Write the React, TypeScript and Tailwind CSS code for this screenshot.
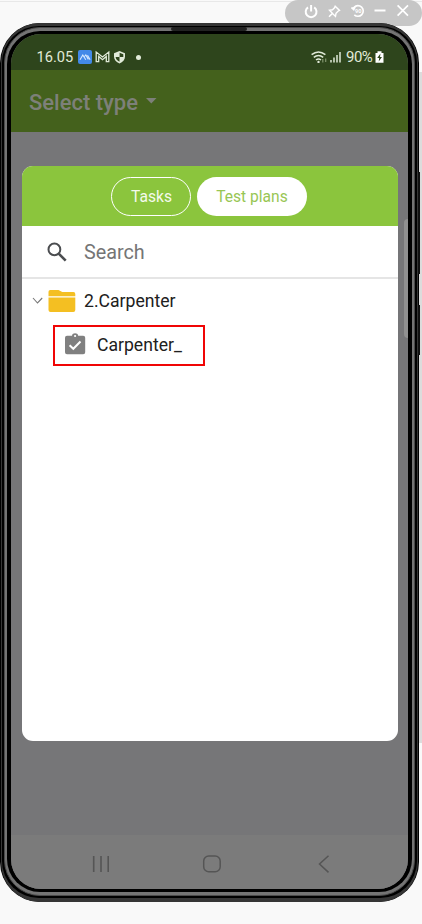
import React from 'react';

const WindowControls = () => (
  <div className="flex h-[26px] w-[137px] items-center gap-[8px] rounded-full bg-[#c6c6c6] pb-[5px] pl-[17.5px] text-white">
    <svg className="h-4 w-4" viewBox="0 0 16 16" fill="none" stroke="currentColor" strokeWidth="2">
      <path d="M5 4.4a5.4 5.4 0 1 0 6.200 0M8.100 2v6.500" />
    </svg>
    <svg className="h-4 w-4" viewBox="0 0 16 16" fill="none" stroke="currentColor" strokeWidth="1.4">
      <path d="M8.200 3.200l4.300 4.200-1.500.8-2 2.200-.5 3-3-3L2 13.800l3.400-3.500-2.900-3 3-.5 2-2z" />
    </svg>
    <svg className="h-4 w-4" viewBox="0 0 16 16" fill="none" stroke="currentColor" strokeWidth="1.6">
      <path d="M3.100 4.300a5.300 5.300 0 1 1 .2 7.500" />
      <path d="M-.5 4.700L5 3.600 3 8z" fill="currentColor" stroke="none" />
      <text x="4" y="10" fontSize="5.6" fontWeight="700" fill="currentColor" stroke="none" fontFamily="Roboto, sans-serif">90</text>
    </svg>
    <svg className="-ml-px h-4 w-4" viewBox="0 0 16 16" stroke="currentColor" strokeWidth="2">
      <path d="M.5 7.500h11" />
    </svg>
    <svg className="-ml-[2px] h-4 w-4" viewBox="0 0 16 16" stroke="currentColor" strokeWidth="1.7">
      <path d="M1.600 2.300L12 12.700M12 2.300L1.600 12.700" />
    </svg>
  </div>
);

const StatusBar = () => (
  <div className="flex h-[36px] items-center justify-between bg-[#2e451c] pl-[25.5px] pr-[24px] pt-[10px] text-[#e1ead9]">
    <div className="flex items-center">
      <span className="w-[41px] whitespace-nowrap text-[14.6px] leading-[18px]">16.05</span>
      <svg className="h-[14px] w-[14px]" viewBox="0 0 14 14" fill="none">
        <rect width="14" height="14" rx="2" fill="#4389e8" />
        <path d="M2 9.800L4.800 5l3 4.800M6.500 6.500L7.800 5l2.600 4.400M9.500 5.200l2.600 4.600" stroke="#d7e9ff" strokeWidth="1.1" />
      </svg>
      <svg className="ml-[3px] h-[14px] w-[15px]" viewBox="0 0 15 14" fill="none" stroke="currentColor" strokeWidth="1.3">
        <path d="M1.200 11.700V2l6.300 5 6.300-5v9.700h-2.500V6.500L7.500 9.700 3.700 6.500v5.200z" />
      </svg>
      <svg className="ml-[3px] h-[14px] w-[13px]" viewBox="0 0 13 14">
        <path d="M6.500 1L12 3.200v3.500c0 3-2.200 5.300-5.500 6.700C3.200 12 1 9.700 1 6.700V3.200z" fill="currentColor" />
        <path d="M6.600 2.700l3.700 1.500v2.900H6.600zM6.500 7.100v4.600c-2.300-1-3.700-2.600-3.900-4.600z" fill="#2e451c" />
      </svg>
      <span className="ml-[10px] h-[5px] w-[5px] rounded-full bg-current" />
    </div>
    <div className="flex items-center">
      <svg className="h-[14px] w-[16px]" viewBox="0 0 16 14" fill="none" stroke="currentColor" strokeWidth="1.5">
        <path d="M.6 4.600q6.900-5.400 13.800 0M2.800 7.300q4.700-3.800 9.400 0M5 10q2.500-2 5 0" />
        <circle cx="7.5" cy="11.9" r="1.2" fill="currentColor" stroke="none" />
        <path d="M11.800 9v3.500M14.700 8.500V12" stroke="#81946f" strokeWidth="1.2" />
      </svg>
      <svg className="ml-[3px] h-[12px] w-[12px]" viewBox="0 0 12 12" stroke="currentColor" strokeWidth="1.5">
        <path d="M1 9v2.500M4 6.500v5M7 4v7.500M10 1v10.500" />
      </svg>
      <span className="ml-[4px] w-[29px] whitespace-nowrap text-[15px] leading-[18px] tracking-[-0.5px]">90%</span>
      <svg className="h-[12px] w-[9px]" viewBox="0 0 9 12">
        <path d="M.5 2H2.500V.3h4V2h2v9.700h-8z" fill="#fff" />
        <path d="M5.500 2.500L2.200 7.100h2l-.5 3.400L7 5.900H5z" fill="#2e451c" />
      </svg>
    </div>
  </div>
);

const Dialog = () => (
  <div className="mx-auto flex h-[575px] w-[376px] flex-col overflow-hidden rounded-[11px] bg-white">
    <div className="flex h-[60px] items-center justify-center gap-[6px] bg-[#8bc53d] pr-[1px] text-[15.6px]">
      <button className="h-[39px] w-[80px] rounded-full border border-white pl-px pt-[3px] text-[#f4faeb]">Tasks</button>
      <button className="h-[39px] w-[110px] rounded-full bg-white pt-[3px] text-[#98c654]">Test plans</button>
    </div>
    <div className="flex h-[53px] items-center gap-[16.5px] border-b-2 border-[#e5e5e5] pl-[24px] pt-px">
      <svg className="h-[22px] w-[22px]" viewBox="0 0 22 22" fill="none" stroke="#4b4d50">
        <circle cx="8.4" cy="8.4" r="5.9" strokeWidth="2" />
        <path d="M12.700 12.700l7 7" strokeWidth="2.6" />
      </svg>
      <span className="pt-[2px] text-[19.8px] leading-6 text-[#757575]">Search</span>
    </div>
    <div className="flex h-[46px] items-center pb-[2px] pl-[10px]">
      <svg className="h-[12px] w-[12px]" viewBox="0 0 12 12" fill="none" stroke="#777" strokeWidth="1.1">
        <path d="M1 3l4.500 5L10.200 3" />
      </svg>
      <svg className="ml-[4px] h-[22px] w-[28px]" viewBox="0 0 28 22">
        <path d="M.5 6.300V1.800Q.5 0 2.300 0h8.200l3.800 2h11.200q1.800 0 1.800 2v2.300zM.5 7.600h26.800V20q0 2-2 2H2.500q-2 0-2-2z" fill="#f4bf22" />
      </svg>
      <span className="ml-[8.5px] text-[17.6px] leading-6 text-[#202020]">2.Carpenter</span>
    </div>
    <div className="ml-[31px] flex h-[41px] w-[152px] items-center gap-[11.5px] border-2 border-[#f00505] pb-[2px] pl-[10px]">
      <svg className="-mt-px h-[22px] w-[21px]" viewBox="0 0 21 22" fill="none">
        <path d="M2 2.700h5c.3-3.200 5.800-3.200 6.200 0h5q2 0 2 2v14.500q0 2-2 2H2q-2 0-2-2V4.700q0-2 2-2z" fill="#808080" />
        <circle cx="10.1" cy="3" r="1.1" fill="#fff" />
        <path d="M4.600 12.200l3.700 3.600 7.200-7.300" stroke="#fff" strokeWidth="2" />
      </svg>
      <span className="pt-px text-[17.6px] leading-6 text-[#202020]">Carpenter_</span>
    </div>
  </div>
);

const NavigationBar = () => (
  <div className="flex h-[54px] items-center justify-between bg-[#7b7b7b] pl-[81px] pr-[78px] pt-[4px]">
    <svg className="h-[18px] w-[18px]" viewBox="0 0 18 18" stroke="#555" strokeWidth="1.6">
      <path d="M1.700 1v16M9 1v16M16.200 1v16" />
    </svg>
    <svg className="-ml-[4px] h-[18px] w-[20px]" viewBox="0 0 20 18" fill="none" stroke="#555" strokeWidth="1.5">
      <rect x="1.7" y="1" width="16.5" height="15.8" rx="5" />
    </svg>
    <svg className="h-[18px] w-[12px]" viewBox="0 0 12 18" fill="none" stroke="#555" strokeWidth="1.5">
      <path d="M10.500.7L1.500 9l9 8.400" />
    </svg>
  </div>
);

const Screen = () => (
  <div className="flex h-full flex-col overflow-hidden rounded-[30px] bg-[#767678]">
    <StatusBar />
    <header className="flex h-[62px] items-center gap-[8px] bg-[#44611c] pl-[18px] pt-[3px] text-[#7d8079]">
      <span className="text-[22px] font-medium leading-7">Select type</span>
      <svg className="-mt-[3px] h-[6px] w-[11px]" viewBox="0 0 11 6" fill="currentColor">
        <path d="M0 0h10.500L5.300 5.500z" />
      </svg>
    </header>
    <div className="flex flex-1 flex-col pt-[34px]">
      <Dialog />
    </div>
    <NavigationBar />
  </div>
);

export default function App() {
  return (
    <main className="relative flex h-[924px] w-[422px] flex-col overflow-hidden bg-[#f9f9f9] font-['Roboto',sans-serif]">
      <div className="flex h-[23px] justify-end bg-[linear-gradient(#f9f9f9_1px,#e8e8e8_1px,#e8e8e8_2px,#f9f9f9_2px)]">
        <WindowControls />
      </div>
      <div className="relative flex">
        <div className="h-[879px] w-[419px] shrink-0 rounded-[40px] bg-black px-px">
          <div className="h-full rounded-[39px] bg-[#363636] px-px pb-[4px] pt-[3px]">
            <div className="h-full rounded-[37px] bg-black px-[2px] pb-[2px] pt-px">
              <div className="h-full rounded-[36px] border border-[#4a4a4a] bg-[#747474] px-[2px] py-[3px]">
                <div className="h-full rounded-[33px] bg-black px-[4px] py-[3px]">
                  <Screen />
                </div>
              </div>
            </div>
          </div>
        </div>
        <div className="mt-[49px] h-[671px] w-[3px] bg-[#dcdcdc]">
          <div className="-ml-px mt-[100px] h-[102px] w-[2px] bg-[#111]" />
          <div className="-ml-px mt-[31px] h-[50px] w-[2px] bg-[#111]" />
        </div>
        <div className="absolute left-[171px] top-[4px] h-[4px] w-[76px] rounded-sm bg-[#222]" />
        <div className="absolute left-[404px] top-[196px] h-[119px] w-[4px] rounded-l-md bg-[#909090]" />
      </div>
    </main>
  );
}
